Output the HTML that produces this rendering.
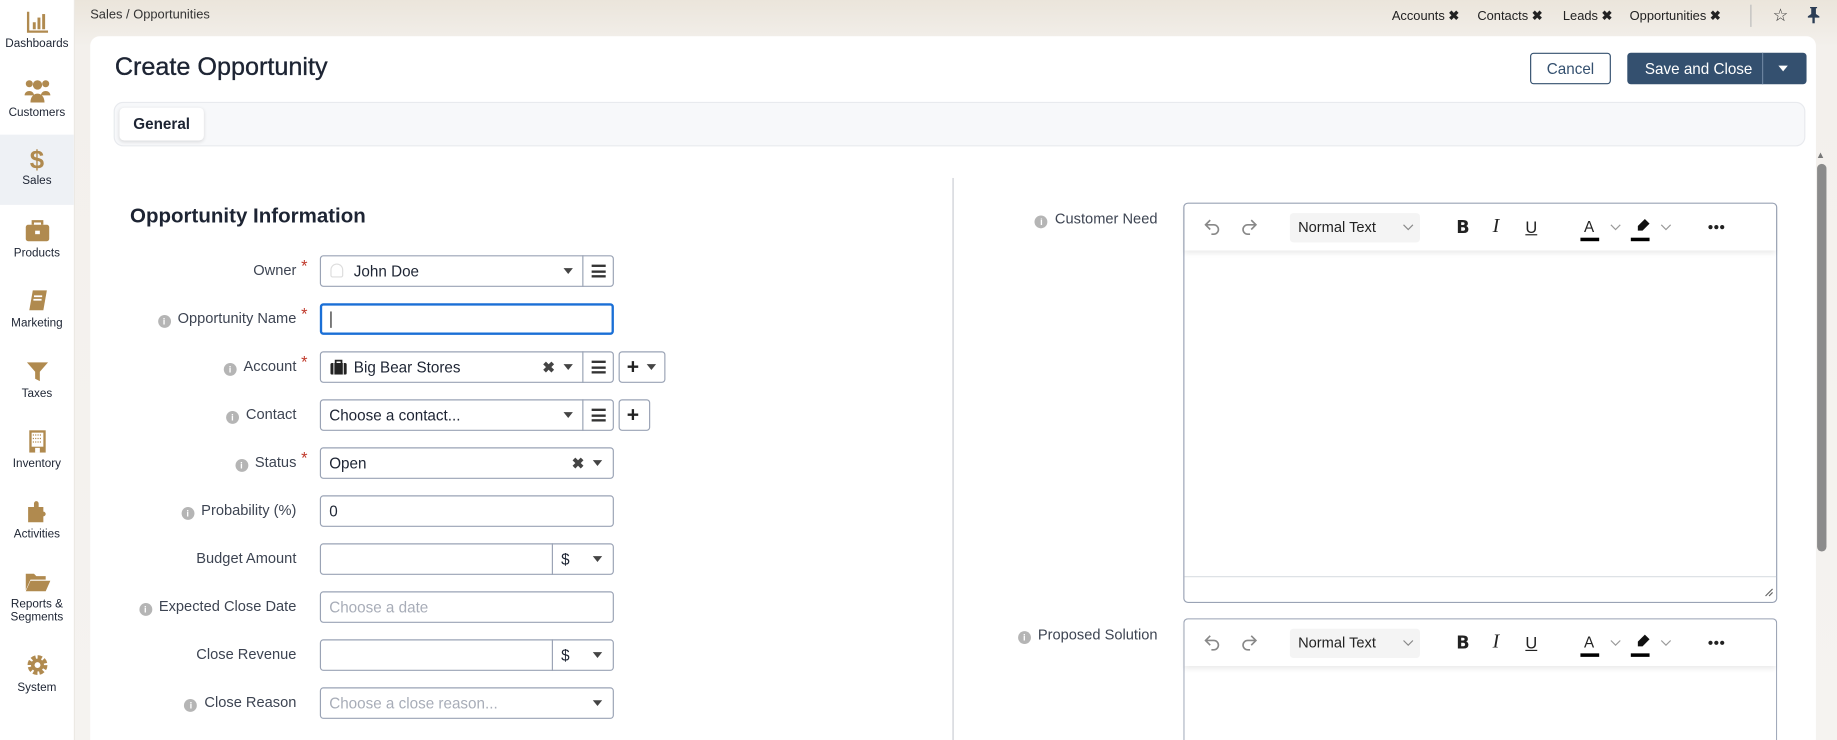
<!DOCTYPE html>
<html><head><meta charset="utf-8"><style>
*{box-sizing:border-box;margin:0;padding:0}
html,body{width:1837px;height:740px;overflow:hidden;background:#f4f2ef;font-family:"Liberation Sans",sans-serif;color:#1d2433}
#w{position:absolute;left:0;top:0;width:1568px;height:632px;overflow:hidden;transform:scale(1.17156,1.17089);transform-origin:0 0;background:linear-gradient(#ebe5db,#f3f0ec 40px,#f5f3f0)}
.a{position:absolute}
#side{left:0;top:0;width:64px;height:632px;background:#fff;border-right:1px solid #ece9e4}
.si{position:absolute;left:0;width:63px;text-align:center;font-size:10px;color:#1d2433}
.si svg{display:block;margin:0 auto 3px}
.lab{position:absolute;right:0;font-size:12.5px;color:#3d4452;text-align:right;white-space:nowrap}
.inf{display:inline-block;width:11px;height:11px;border-radius:50%;background:#b5b5b5;color:#fff;font-size:8px;line-height:11px;text-align:center;font-weight:bold;margin-right:6px;vertical-align:-1px}
.ast{position:absolute;color:#c0392b;font-size:14px}
.in{position:absolute;left:273px;height:27px;border:1px solid #9aa3b5;border-radius:3px;background:#fff;font-size:13px;line-height:25px;padding-left:7px;color:#1d2433}
.ph{color:#a8adb8}
.car{position:absolute;width:0;height:0;border-left:4.5px solid transparent;border-right:4.5px solid transparent;border-top:5px solid #444}
.btn{position:absolute;height:27px;border:1px solid #9aa3b5;border-radius:3px;background:#fff}
.ham{position:absolute;left:231px;top:7px;width:12px;height:11px}
.ham i{position:absolute;left:0;width:12px;height:2px;background:#333}
.x{position:absolute;font-size:13px;font-weight:bold;color:#444}
.ed{position:absolute;left:1010px;width:507px;border:1px solid #9aa3b5;border-radius:4px;background:#fff}
.tb{position:absolute;left:0;top:0;width:505px;height:40px;box-shadow:0 3px 4px rgba(0,0,0,.08)}
.tb span{position:absolute;top:11px;font-size:15px;color:#222}
.tab{position:absolute;top:7px;font-size:11px;color:#222;white-space:nowrap}
</style></head><body><div id="w">
<div class="a" id="side">
 <div class="si" style="top:9px"><svg width="20" height="20" viewBox="0 0 20 20"><path d="M2 1v17h17" stroke="#b08a4f" stroke-width="2" fill="none"/><rect x="6" y="10" width="2.5" height="6" fill="#b08a4f"/><rect x="10" y="6" width="2.5" height="10" fill="#b08a4f"/><rect x="14" y="3" width="2.5" height="13" fill="#b08a4f"/></svg>Dashboards</div>
 <div class="si" style="top:66px"><svg width="24" height="22" viewBox="0 0 24 21"><circle cx="5" cy="5" r="3" fill="#b08a4f"/><circle cx="19" cy="5" r="3" fill="#b08a4f"/><circle cx="12" cy="6" r="4" fill="#b08a4f"/><path d="M1 15c0-5 8-5 8 0zM15 15c0-5 8-5 8 0zM6 21c0-10 12-10 12 0z" fill="#b08a4f"/></svg>Customers</div>
 <div class="a" style="left:0;top:115px;width:63px;height:60px;background:#eef1f5"></div>
 <div class="si" style="top:124px"><div style="font-size:22px;color:#b08a4f;font-weight:bold;line-height:25px">$</div>Sales</div>
 <div class="si" style="top:186px"><svg width="22" height="22" viewBox="0 0 22 20"><rect x="1" y="5" width="20" height="14" rx="2" fill="#b08a4f"/><path d="M7 5V2h8v3" stroke="#b08a4f" stroke-width="2" fill="none"/><rect x="9" y="10" width="4" height="3" fill="#fff"/></svg>Products</div>
 <div class="si" style="top:246px"><svg width="20" height="22" viewBox="0 0 20 20"><path d="M6 1h12l-3 17H3z" fill="#b08a4f"/><path d="M7 6h7M6.5 9h7" stroke="#fff" stroke-width="1.5"/></svg>Marketing</div>
 <div class="si" style="top:307px"><svg width="20" height="21" viewBox="0 0 20 20"><path d="M1 2h18l-7 8v8l-4-2v-6z" fill="#b08a4f"/></svg>Taxes</div>
 <div class="si" style="top:366px"><svg width="20" height="22" viewBox="0 0 20 21"><rect x="3" y="1" width="14" height="19" fill="#b08a4f"/><rect x="5" y="3" width="10" height="12" fill="#fff"/><path d="M6 5h8M6 8h8M6 11h8" stroke="#b08a4f" stroke-width="1" stroke-dasharray="1 1"/><rect x="8" y="16" width="4" height="4" fill="#fff"/></svg>Inventory</div>
 <div class="si" style="top:426px"><svg width="20" height="22" viewBox="0 0 20 20"><path d="M2 6h5V3a2 2 0 0 1 4 0v3h4v4a2 2 0 0 1 0 4v5H2z" fill="#b08a4f"/></svg>Activities</div>
 <div class="si" style="top:486px"><svg width="22" height="22" viewBox="0 0 22 20"><path d="M1 3h7l2 2h8v3H5l-4 9z" fill="#b08a4f"/><path d="M5 9h17l-4 9H1z" fill="#b08a4f"/></svg>Reports &amp;<br>Segments</div>
 <div class="si" style="top:557px"><svg width="20" height="22" viewBox="0 0 20 20"><circle cx="10" cy="10" r="6" fill="none" stroke="#b08a4f" stroke-width="5" stroke-dasharray="3.2 1.5"/><circle cx="10" cy="10" r="5.5" fill="#b08a4f"/><circle cx="10" cy="10" r="2.5" fill="#fff"/></svg>System</div>
</div>
<div class="a" style="left:77px;top:7px;font-size:11px;color:#333">Sales / Opportunities</div>
<div class="tab" style="left:1188px">Accounts <b>✖</b></div>
<div class="tab" style="left:1261px">Contacts <b>✖</b></div>
<div class="tab" style="left:1334px">Leads <b>✖</b></div>
<div class="tab" style="left:1391px">Opportunities <b>✖</b></div>
<div class="a" style="left:1494px;top:4px;width:1px;height:19px;background:#bbb"></div>
<div class="a" style="left:1513px;top:4px;font-size:15px;color:#333">☆</div>
<svg class="a" style="left:1543px;top:6px" width="10" height="14" viewBox="0 0 10 14"><path d="M2 0h6v1H7v5l3 2v1H6v5H4V9H0V8l3-2V1H2z" fill="#2c3e55"/></svg>
<div class="a" style="left:77px;top:31px;width:1473px;height:601px;background:#fff;border-radius:8px 8px 0 0"></div>
<div class="a" style="left:98px;top:45px;font-size:21.5px;color:#1d2433;font-weight:500;-webkit-text-stroke:.3px #1d2433">Create Opportunity</div>
<div class="a" style="left:1306px;top:45px;width:69px;height:27px;border:1px solid #34506f;border-radius:3px;font-size:13px;color:#34506f;text-align:center;line-height:25px">Cancel</div>
<div class="a" style="left:1389px;top:45px;width:153px;height:27px;background:#34506f;border-radius:3px;font-size:13px;color:#fff;line-height:27px;padding-left:15px">Save and Close</div>
<div class="a" style="left:1504px;top:45px;width:1px;height:27px;background:#6c83a0"></div>
<div class="car" style="left:1518px;top:56px;border-top-color:#fff"></div>
<div class="a" style="left:97px;top:87px;width:1444px;height:38px;background:#f7f8fa;border:1px solid #e8eaee;border-radius:8px"></div>
<div class="a" style="left:102px;top:92px;width:72px;height:28px;background:#fff;border-radius:4px;box-shadow:0 1px 3px rgba(0,0,0,.12);font-size:13px;font-weight:bold;text-align:center;line-height:28px;color:#1d2433">General</div>
<div class="a" style="left:1550px;top:128px;font-size:8px;color:#777">▲</div>
<div class="a" style="left:1551px;top:140px;width:8px;height:331px;background:#8b8b8b;border-radius:4px"></div>
<div class="a" style="left:813px;top:152px;width:1px;height:480px;background:#c9ccd2"></div>
<div class="a" style="left:111px;top:174px;font-size:17.5px;font-weight:bold;color:#1d2433">Opportunity Information</div>

<div class="a" style="left:0;top:0;width:253px;height:632px">
 <div class="lab" style="top:224px">Owner</div>
 <div class="lab" style="top:265px"><span class="inf">i</span>Opportunity Name</div>
 <div class="lab" style="top:306px"><span class="inf">i</span>Account</div>
 <div class="lab" style="top:347px"><span class="inf">i</span>Contact</div>
 <div class="lab" style="top:388px"><span class="inf">i</span>Status</div>
 <div class="lab" style="top:429px"><span class="inf">i</span>Probability (%)</div>
 <div class="lab" style="top:470px">Budget Amount</div>
 <div class="lab" style="top:511px"><span class="inf">i</span>Expected Close Date</div>
 <div class="lab" style="top:552px">Close Revenue</div>
 <div class="lab" style="top:593px"><span class="inf">i</span>Close Reason</div>
</div>
<div class="ast" style="left:257px;top:219px">*</div>
<div class="ast" style="left:257px;top:260px">*</div>
<div class="ast" style="left:257px;top:301px">*</div>
<div class="ast" style="left:257px;top:383px">*</div>

<div class="in" style="top:218px;width:251px;padding-left:28px">John Doe<span class="a" style="left:8px;top:6px;width:11px;height:12px;border:1px solid #ddd;border-radius:6px 6px 2px 2px"></span><span class="car" style="left:207px;top:10px"></span><span class="a" style="left:223px;top:-1px;width:1px;height:27px;background:#9aa3b5"></span><span class="ham"><i style="top:0"></i><i style="top:4.5px"></i><i style="top:9px"></i></span></div>
<div class="in" style="top:259px;width:251px;border:2px solid #1a6fd6;line-height:23px"><span class="a" style="left:7px;top:5px;width:1px;height:14px;background:#222"></span></div>
<div class="in" style="top:300px;width:251px;padding-left:28px">Big Bear Stores<svg class="a" style="left:8px;top:6px" width="14" height="13" viewBox="0 0 14 13"><rect x="0" y="3" width="14" height="10" rx="1.5" fill="#222"/><path d="M4.5 3V1h5v2" stroke="#222" stroke-width="1.5" fill="none"/><path d="M3 3v10M11 3v10" stroke="#fff" stroke-width=".8"/></svg><span class="x" style="left:189px;top:0">✖</span><span class="car" style="left:207px;top:10px"></span><span class="a" style="left:223px;top:-1px;width:1px;height:27px;background:#9aa3b5"></span><span class="ham"><i style="top:0"></i><i style="top:4.5px"></i><i style="top:9px"></i></span></div>
<div class="btn" style="left:528px;top:300px;width:40px"><span class="a" style="left:6px;top:0;font-size:18px;font-weight:bold;line-height:24px;color:#222">+</span><span class="car" style="left:23px;top:10px"></span></div>
<div class="in" style="top:341px;width:251px">Choose a contact...<span class="car" style="left:207px;top:10px"></span><span class="a" style="left:223px;top:-1px;width:1px;height:27px;background:#9aa3b5"></span><span class="ham"><i style="top:0"></i><i style="top:4.5px"></i><i style="top:9px"></i></span></div>
<div class="btn" style="left:528px;top:341px;width:27px"><span class="a" style="left:6px;top:0;font-size:18px;font-weight:bold;line-height:24px;color:#222">+</span></div>
<div class="in" style="top:382px;width:251px">Open<span class="x" style="left:214px;top:0">✖</span><span class="car" style="left:232px;top:10px"></span></div>
<div class="in" style="top:423px;width:251px">0</div>
<div class="in" style="top:464px;width:251px"><span class="a" style="left:197px;top:-1px;width:1px;height:27px;background:#9aa3b5"></span><span class="a" style="left:205px;top:0">$</span><span class="car" style="left:232px;top:10px"></span></div>
<div class="in ph" style="top:505px;width:251px">Choose a date</div>
<div class="in" style="top:546px;width:251px"><span class="a" style="left:197px;top:-1px;width:1px;height:27px;background:#9aa3b5"></span><span class="a" style="left:205px;top:0">$</span><span class="car" style="left:232px;top:10px"></span></div>
<div class="in ph" style="top:587px;width:251px">Choose a close reason...<span class="car" style="left:232px;top:10px"></span></div>

<div class="lab" style="left:0;width:988px;top:180px"><span class="inf">i</span>Customer Need</div>
<div class="lab" style="left:0;width:988px;top:535px"><span class="inf">i</span>Proposed Solution</div>

<div class="ed" style="top:173px;height:342px">
 <div class="tb" id="t1"></div>
 <div class="a" style="left:0;top:318px;width:505px;height:1px;background:#dcdfe4"></div>
 <svg class="a" style="left:495px;top:328px" width="8" height="8"><path d="M1 7L7 1M4 7L7 4" stroke="#666"/></svg>
</div>
<div class="ed" style="top:528px;height:104px;border-bottom:none;border-radius:4px 4px 0 0">
 <div class="tb" id="t2"></div>
</div>
</div>
<script>
var h='<svg class="a" style="left:17px;top:12px" width="14" height="16" viewBox="0 0 14 16"><path d="M5 2L1 6l4 4M1 6h7a4 4 0 0 1 0 8H6" stroke="#888" stroke-width="1.4" fill="none"/></svg>'+
'<svg class="a" style="left:48px;top:12px" width="14" height="16" viewBox="0 0 14 16"><path d="M9 2l4 4-4 4M13 6H6a4 4 0 0 0 0 8h2" stroke="#888" stroke-width="1.4" fill="none"/></svg>'+
'<div class="a" style="left:90px;top:8px;width:111px;height:25px;background:#f4f4f4;border-radius:3px;font-size:12.5px;line-height:25px;padding-left:7px;color:#222">Normal Text<svg class="a" style="left:96px;top:9px" width="10" height="7"><path d="M1 1l4 4 4-4" stroke="#888" fill="none"/></svg></div>'+
'<span style="left:232px;font-weight:bold;font-family:\'DejaVu Sans\',sans-serif;font-size:15px">B</span>'+
'<span style="left:263px;font-style:italic;font-family:\'Liberation Serif\',serif;font-size:17px;top:9px">I</span>'+
'<span style="left:291px;text-decoration:underline;font-size:14px;top:12px">U</span>'+
'<span style="left:341px;font-size:13px;top:12px">A</span><div class="a" style="left:338px;top:29px;width:16px;height:3px;background:#000"></div>'+
'<svg class="a" style="left:363px;top:17px" width="10" height="7"><path d="M1 1l4 4 4-4" stroke="#999" fill="none"/></svg>'+
'<svg class="a" style="left:384px;top:12px" width="14" height="14" viewBox="0 0 14 14"><path d="M9 1l4 4-6 6H3V7z" fill="#111"/></svg><div class="a" style="left:381px;top:29px;width:16px;height:3px;background:#000"></div>'+
'<svg class="a" style="left:406px;top:17px" width="10" height="7"><path d="M1 1l4 4 4-4" stroke="#999" fill="none"/></svg>'+
'<svg class="a" style="left:447px;top:18px" width="14" height="4"><circle cx="2" cy="2" r="1.8" fill="#222"/><circle cx="7" cy="2" r="1.8" fill="#222"/><circle cx="12" cy="2" r="1.8" fill="#222"/></svg>';
document.getElementById('t1').innerHTML=h;document.getElementById('t2').innerHTML=h;
</script>
</body></html>
